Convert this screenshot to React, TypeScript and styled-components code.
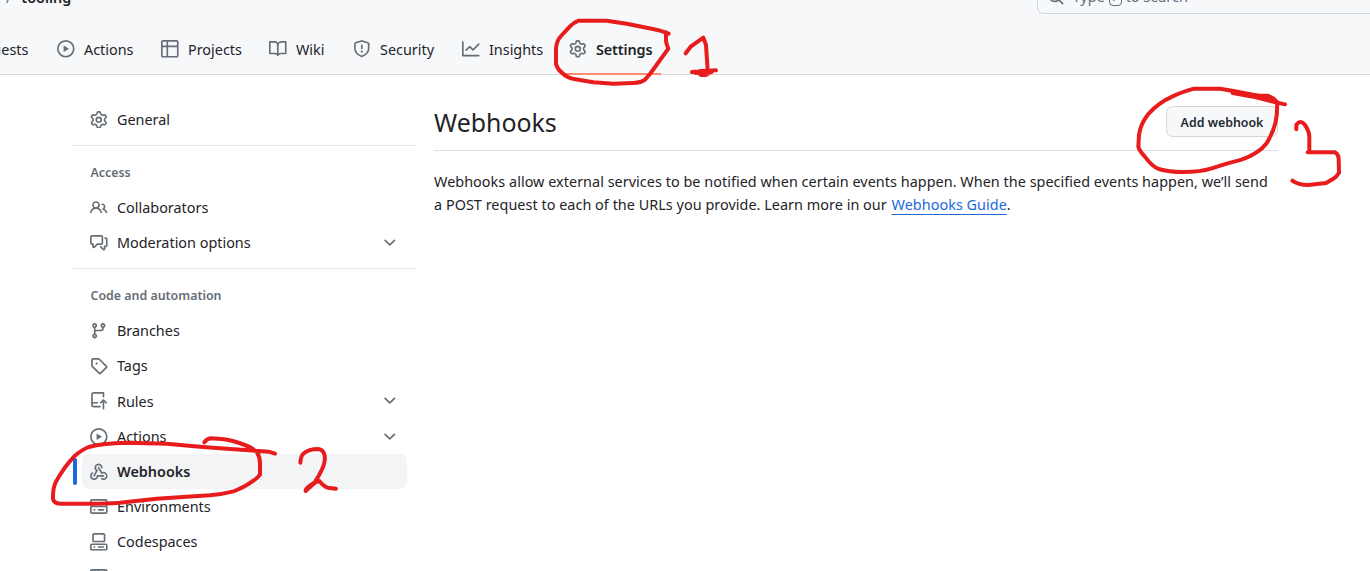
import React from "react";
import styled, { createGlobalStyle } from "styled-components";

const GlobalStyle = createGlobalStyle`
  *, *::before, *::after { box-sizing: border-box; }
  body {
    margin: 0;
    background: #ffffff;
    color: #1f2328;
    font-family: "Noto Sans", "Open Sans", sans-serif;
    font-size: 14.4px;
    overflow: hidden;
  }
`;

const icons = {
  gear: "M8 0a8.2 8.2 0 0 1 .701.031C9.444.095 9.99.645 10.16 1.29l.288 1.107c.018.066.079.158.212.224.231.114.454.243.668.386.123.082.233.09.299.071l1.103-.303c.644-.176 1.392.021 1.82.63.27.385.506.792.704 1.218.315.675.111 1.422-.364 1.891l-.814.806c-.049.048-.098.147-.088.294.016.257.016.515 0 .772-.01.147.038.246.088.294l.814.806c.475.469.679 1.216.364 1.891a7.977 7.977 0 0 1-.704 1.217c-.428.61-1.176.807-1.82.63l-1.102-.302c-.067-.019-.177-.011-.3.071a5.909 5.909 0 0 1-.668.386c-.133.066-.194.158-.211.224l-.29 1.106c-.168.646-.715 1.196-1.458 1.26a8.006 8.006 0 0 1-1.402 0c-.743-.064-1.289-.614-1.458-1.26l-.289-1.106c-.018-.066-.079-.158-.212-.224a5.738 5.738 0 0 1-.668-.386c-.123-.082-.233-.09-.299-.071l-1.103.303c-.644.176-1.392-.021-1.82-.63a8.12 8.12 0 0 1-.704-1.218c-.315-.675-.111-1.422.363-1.891l.815-.806c.05-.048.098-.147.088-.294a6.214 6.214 0 0 1 0-.772c.01-.147-.038-.246-.088-.294l-.815-.806C.635 6.045.431 5.298.746 4.623a7.92 7.92 0 0 1 .704-1.217c.428-.61 1.176-.807 1.82-.63l1.102.302c.067.019.177.011.3-.071.214-.143.437-.272.668-.386.133-.066.194-.158.211-.224l.29-1.106C6.009.645 6.556.095 7.299.03 7.53.01 7.764 0 8 0Zm-.571 1.525c-.036.003-.108.036-.137.146l-.289 1.105c-.147.561-.549.967-.998 1.189-.173.086-.34.183-.5.29-.417.278-.97.423-1.529.27l-1.103-.303c-.109-.03-.175.016-.195.045-.22.312-.412.644-.573.99-.014.031-.021.11.059.19l.815.806c.411.406.562.957.53 1.456a4.709 4.709 0 0 0 0 .582c.032.499-.119 1.05-.53 1.456l-.815.806c-.081.08-.073.159-.059.19.162.346.353.677.573.989.02.03.085.076.195.046l1.102-.303c.56-.153 1.113-.008 1.53.27.161.107.328.204.501.29.447.222.85.629.997 1.189l.289 1.105c.029.109.101.143.137.146a6.6 6.6 0 0 0 1.142 0c.036-.003.108-.036.137-.146l.289-1.105c.147-.561.549-.967.998-1.189.173-.086.34-.183.5-.29.417-.278.97-.423 1.529-.27l1.103.303c.109.029.175-.016.195-.045.22-.313.411-.644.573-.99.014-.031.021-.11-.059-.19l-.815-.806c-.411-.406-.562-.957-.53-1.456a4.709 4.709 0 0 0 0-.582c-.032-.499.119-1.05.53-1.456l.815-.806c.081-.08.073-.159.059-.19a6.464 6.464 0 0 0-.573-.989c-.02-.03-.085-.076-.195-.046l-1.102.303c-.56.153-1.113.008-1.53-.27a4.44 4.44 0 0 0-.501-.29c-.447-.222-.85-.629-.997-1.189l-.289-1.105c-.029-.11-.101-.143-.137-.146a6.6 6.6 0 0 0-1.142 0ZM11 8a3 3 0 1 1-6 0 3 3 0 0 1 6 0ZM9.5 8a1.5 1.5 0 1 0-3.001.001A1.5 1.5 0 0 0 9.5 8Z",
  play: "M8 0a8 8 0 1 1 0 16A8 8 0 0 1 8 0ZM1.5 8a6.5 6.5 0 1 0 13 0 6.5 6.5 0 0 0-13 0Zm4.879-2.773 4.264 2.559a.25.25 0 0 1 0 .428l-4.264 2.559A.25.25 0 0 1 6 10.559V5.442a.25.25 0 0 1 .379-.215Z",
  table: "M0 1.75C0 .784.784 0 1.75 0h12.5C15.216 0 16 .784 16 1.75v12.5A1.75 1.75 0 0 1 14.25 16H1.75A1.75 1.75 0 0 1 0 14.25ZM6.5 6.5v8h7.75a.25.25 0 0 0 .25-.25V6.5Zm8-1.5V1.75a.25.25 0 0 0-.25-.25H6.5V5Zm-13 1.5v7.75c0 .138.112.25.25.25H5v-8ZM5 5V1.5H1.75a.25.25 0 0 0-.25.25V5Z",
  book: "M0 1.75A.75.75 0 0 1 .75 1h4.253c1.227 0 2.317.59 3 1.501A3.743 3.743 0 0 1 11.006 1h4.245a.75.75 0 0 1 .75.75v10.5a.75.75 0 0 1-.75.75h-4.507a2.25 2.25 0 0 0-1.591.659l-.622.621a.75.75 0 0 1-1.06 0l-.622-.621A2.25 2.25 0 0 0 5.258 13H.75a.75.75 0 0 1-.75-.75Zm7.251 10.324.004-5.073-.002-2.253A2.25 2.25 0 0 0 5.003 2.5H1.5v9h3.757a3.75 3.75 0 0 1 1.994.574ZM8.755 4.75l-.004 7.322a3.752 3.752 0 0 1 1.992-.572H14.5v-9h-3.495a2.25 2.25 0 0 0-2.25 2.25Z",
  shield: "M7.467.133a1.748 1.748 0 0 1 1.066 0l5.25 1.68A1.75 1.75 0 0 1 15 3.48V7c0 1.566-.32 3.182-1.303 4.682-.983 1.498-2.585 2.813-5.032 3.855a1.697 1.697 0 0 1-1.33 0c-2.447-1.042-4.049-2.357-5.032-3.855C1.32 10.182 1 8.566 1 7V3.48a1.75 1.75 0 0 1 1.217-1.667Zm.61 1.429a.25.25 0 0 0-.153 0l-5.25 1.68a.25.25 0 0 0-.174.238V7c0 1.358.275 2.666 1.057 3.86.784 1.194 2.121 2.34 4.366 3.297a.196.196 0 0 0 .154 0c2.245-.956 3.582-2.104 4.366-3.298C13.225 9.666 13.5 8.36 13.5 7V3.48a.251.251 0 0 0-.174-.237l-5.25-1.68ZM8.75 4.75v3a.75.75 0 0 1-1.5 0v-3a.75.75 0 0 1 1.5 0ZM9 10.5a1 1 0 1 1-2 0 1 1 0 0 1 2 0Z",
  graph: "M1.5 1.75V13.5h13.75a.75.75 0 0 1 0 1.5H.75a.75.75 0 0 1-.75-.75V1.75a.75.75 0 0 1 1.5 0Zm14.28 2.53-5.25 5.25a.75.75 0 0 1-1.06 0L7 7.06 4.28 9.78a.751.751 0 0 1-1.042-.018.751.751 0 0 1-.018-1.042l3.25-3.25a.75.75 0 0 1 1.06 0L10 7.94l4.72-4.72a.751.751 0 0 1 1.042.018.751.751 0 0 1 .018 1.042Z",
  people: "M2 5.5a3.5 3.5 0 1 1 5.898 2.549 5.508 5.508 0 0 1 3.034 4.084.75.75 0 1 1-1.482.235 4 4 0 0 0-7.9 0 .75.75 0 0 1-1.482-.236A5.507 5.507 0 0 1 3.102 8.05 3.493 3.493 0 0 1 2 5.5ZM11 4a3.001 3.001 0 0 1 2.22 5.018 5.01 5.01 0 0 1 2.56 3.012.749.749 0 0 1-.885.954.752.752 0 0 1-.549-.514 3.507 3.507 0 0 0-2.522-2.372.75.75 0 0 1-.574-.73v-.352a.75.75 0 0 1 .416-.672A1.5 1.5 0 0 0 11 5.5.75.75 0 0 1 11 4Zm-5.5-.5a2 2 0 1 0-.001 3.999A2 2 0 0 0 5.5 3.5Z",
  discussion: "M1.75 1h8.5c.966 0 1.75.784 1.75 1.75v5.5A1.75 1.75 0 0 1 10.25 10H7.061l-2.574 2.573A1.458 1.458 0 0 1 2 11.543V10h-.25A1.75 1.75 0 0 1 0 8.25v-5.5C0 1.784.784 1 1.75 1ZM1.5 2.75v5.5c0 .138.112.25.25.25h1a.75.75 0 0 1 .75.75v2.19l2.72-2.72a.749.749 0 0 1 .53-.22h3.5a.25.25 0 0 0 .25-.25v-5.5a.25.25 0 0 0-.25-.25h-8.5a.25.25 0 0 0-.25.25Zm13 2a.25.25 0 0 0-.25-.25h-.5a.75.75 0 0 1 0-1.5h.5c.966 0 1.75.784 1.75 1.75v5.5A1.75 1.75 0 0 1 14.25 12H14v1.543a1.458 1.458 0 0 1-2.487 1.03L9.22 12.28a.749.749 0 0 1 .326-1.275.749.749 0 0 1 .734.215l2.22 2.22v-2.19a.75.75 0 0 1 .75-.75h1a.25.25 0 0 0 .25-.25Z",
  branch: "M9.5 3.25a2.25 2.25 0 1 1 3 2.122V6A2.5 2.5 0 0 1 10 8.5H6a1 1 0 0 0-1 1v1.128a2.251 2.251 0 1 1-1.5 0V5.372a2.25 2.25 0 1 1 1.5 0v1.836A2.493 2.493 0 0 1 6 7h4a1 1 0 0 0 1-1v-.628A2.25 2.25 0 0 1 9.5 3.25Zm-6 0a.75.75 0 1 0 1.5 0 .75.75 0 0 0-1.5 0Zm8.25-.75a.75.75 0 1 0 0 1.5.75.75 0 0 0 0-1.5ZM4.25 12a.75.75 0 1 0 0 1.5.75.75 0 0 0 0-1.5Z",
  tag: "M1 7.775V2.75C1 1.784 1.784 1 2.75 1h5.025c.464 0 .91.184 1.238.513l6.25 6.25a1.75 1.75 0 0 1 0 2.474l-5.026 5.026a1.75 1.75 0 0 1-2.474 0l-6.25-6.25A1.752 1.752 0 0 1 1 7.775Zm1.5 0c0 .066.026.13.073.177l6.25 6.25a.25.25 0 0 0 .354 0l5.025-5.025a.25.25 0 0 0 0-.354l-6.25-6.25a.25.25 0 0 0-.177-.073H2.75a.25.25 0 0 0-.25.25ZM6 5a1 1 0 1 1 0 2 1 1 0 0 1 0-2Z",
  push: "M1 2.5A2.5 2.5 0 0 1 3.5 0h8.75a.75.75 0 0 1 .75.75v3.5a.75.75 0 0 1-1.5 0V1.5h-8a1 1 0 0 0-1 1v6.708A2.493 2.493 0 0 1 3.5 9h3.25a.75.75 0 0 1 0 1.5H3.5a1 1 0 0 0 0 2h5.75a.75.75 0 0 1 0 1.5H3.5A2.5 2.5 0 0 1 1 11.5Zm13.23 7.79h-.001l-1.224-1.224v6.184a.75.75 0 0 1-1.5 0V9.066L10.28 10.29a.75.75 0 0 1-1.06-1.061l2.505-2.504a.75.75 0 0 1 1.06 0L15.29 9.23a.751.751 0 0 1-.018 1.042.751.751 0 0 1-1.042.018Z",
  webhook: "M5.5 4.25a2.25 2.25 0 0 1 4.5 0 .75.75 0 0 0 1.5 0 3.75 3.75 0 1 0-6.14 2.889l-2.272 4.258a.75.75 0 0 0 1.324.706L7 7.25a.75.75 0 0 0-.309-1.015A2.25 2.25 0 0 1 5.5 4.25ZM7.364 3.607a.75.75 0 0 1 1.03.257l2.608 4.349a3.75 3.75 0 1 1-.628 6.785.75.75 0 0 1 .752-1.299 2.25 2.25 0 1 0-.033-3.88.75.75 0 0 1-1.03-.256L7.107 4.636a.75.75 0 0 1 .257-1.03ZM2.9 8.776A.75.75 0 0 1 2.625 9.8 2.25 2.25 0 1 0 6 11.75a.75.75 0 0 1 .75-.751h5.5a.75.75 0 0 1 0 1.5H7.425a3.751 3.751 0 1 1-5.55-3.998.75.75 0 0 1 1.024.274Z",
  server: "M1.75 1h12.5c.966 0 1.75.784 1.75 1.75v4c0 .372-.116.717-.314 1 .198.283.314.628.314 1v4a1.75 1.75 0 0 1-1.75 1.75H1.75A1.75 1.75 0 0 1 0 12.75v-4c0-.358.109-.707.314-1a1.739 1.739 0 0 1-.314-1v-4C0 1.784.784 1 1.75 1ZM1.5 2.75v4c0 .138.112.25.25.25h12.5a.25.25 0 0 0 .25-.25v-4a.25.25 0 0 0-.25-.25H1.75a.25.25 0 0 0-.25.25Zm.25 5.75a.25.25 0 0 0-.25.25v4c0 .138.112.25.25.25h12.5a.25.25 0 0 0 .25-.25v-4a.25.25 0 0 0-.25-.25ZM7 4.75A.75.75 0 0 1 7.75 4h4.5a.75.75 0 0 1 0 1.5h-4.5A.75.75 0 0 1 7 4.75ZM7.75 10h4.5a.75.75 0 0 1 0 1.5h-4.5a.75.75 0 0 1 0-1.5ZM3 4.75A.75.75 0 0 1 3.75 4h.5a.75.75 0 0 1 0 1.5h-.5A.75.75 0 0 1 3 4.75ZM3.75 10h.5a.75.75 0 0 1 0 1.5h-.5a.75.75 0 0 1 0-1.5Z",
  codespaces: "M0 11.25c0-.966.784-1.75 1.75-1.75h12.5c.966 0 1.75.784 1.75 1.75v3A1.75 1.75 0 0 1 14.25 16H1.75A1.75 1.75 0 0 1 0 14.25Zm2-9.5C2 .784 2.784 0 3.75 0h8.5C13.216 0 14 .784 14 1.75v5a1.75 1.75 0 0 1-1.75 1.75h-8.5A1.75 1.75 0 0 1 2 6.75Zm1.75-.25a.25.25 0 0 0-.25.25v5c0 .138.112.25.25.25h8.5a.25.25 0 0 0 .25-.25v-5a.25.25 0 0 0-.25-.25Zm-2 9.5a.25.25 0 0 0-.25.25v3c0 .138.112.25.25.25h12.5a.25.25 0 0 0 .25-.25v-3a.25.25 0 0 0-.25-.25ZM7 12.75a.75.75 0 0 1 .75-.75h4.5a.75.75 0 0 1 0 1.5h-4.5a.75.75 0 0 1-.75-.75Zm-4 0a.75.75 0 0 1 .75-.75h.5a.75.75 0 0 1 0 1.5h-.5a.75.75 0 0 1-.75-.75Z",
  browser: "M0 2.75C0 1.784.784 1 1.75 1h12.5c.966 0 1.75.784 1.75 1.75v10.5A1.75 1.75 0 0 1 14.25 15H1.75A1.75 1.75 0 0 1 0 13.25ZM14.5 6h-13v7.25c0 .138.112.25.25.25h12.5a.25.25 0 0 0 .25-.25Zm-6-3.5v2h6V2.75a.25.25 0 0 0-.25-.25ZM5 2.5v2h2v-2Zm-3.25 0a.25.25 0 0 0-.25.25V4.5h2v-2Z",
  chevron: "M12.78 5.22a.749.749 0 0 1 0 1.06l-4.25 4.25a.749.749 0 0 1-1.06 0L3.22 6.28a.749.749 0 1 1 1.06-1.06L8 8.939l3.72-3.719a.749.749 0 0 1 1.06 0Z",
  search: "M10.68 11.74a6 6 0 0 1-7.922-8.982 6 6 0 0 1 8.982 7.922l3.04 3.04a.749.749 0 0 1-1.06 1.06ZM11.5 7a4.499 4.499 0 1 0-8.997 0A4.499 4.499 0 0 0 11.5 7Z",
};

type IconName = keyof typeof icons;

const IconSvg = styled.svg`
  width: 17.6px;
  height: 17.6px;
  flex: none;
  fill: #656d76;
`;

const Icon = ({ name }: { name: IconName }) => (
  <IconSvg viewBox="0 0 16 16" aria-hidden="true">
    <path d={icons[name]} />
  </IconSvg>
);

const Page = styled.div`
  position: relative;
  width: 1370px;
  height: 571px;
  overflow: hidden;
`;

const Header = styled.header`
  display: flex;
  flex-direction: column;
  height: 75px;
  background: #f6f8fa;
  border-bottom: 1px solid #d5dae0;
`;

const TopBar = styled.div`
  display: flex;
  flex: none;
  justify-content: space-between;
  height: 35px;
  margin-top: -21px;
`;

const Crumbs = styled.div`
  display: flex;
  gap: 10px;
  padding-left: 6px;
  line-height: 38px;
  color: #656d76;
`;

const RepoName = styled.span`
  font-weight: 600;
  color: #1f2328;
`;

const SearchBox = styled.div`
  display: flex;
  align-items: center;
  width: 350px;
  height: 35px;
  margin-right: -17px;
  padding: 0 10px 0 9px;
  border: 1px solid #d0d7de;
  border-radius: 6.6px;
  color: #656d76;
`;

const SearchHint = styled.span`
  display: flex;
  align-items: center;
  gap: 4px;
  margin-left: 8px;
`;

const Key = styled.kbd`
  display: inline-flex;
  align-items: center;
  justify-content: center;
  width: 13px;
  height: 18px;
  border: 1px solid #656d76;
  border-radius: 4px;
  font: 12px "Noto Sans", sans-serif;
`;

const Tabs = styled.nav`
  display: flex;
  flex: none;
  height: 61px;
  margin-left: -95px;
`;

const Tab = styled.a<{ $width: number; $current?: boolean }>`
  display: flex;
  align-items: center;
  gap: 9.4px;
  flex: none;
  width: ${(p) => p.$width}px;
  padding: 11px 0 0 9px;
  border-bottom: 2px solid ${(p) => (p.$current ? "#fd8c73" : "transparent")};
  font-weight: ${(p) => (p.$current ? 600 : 400)};
  letter-spacing: ${(p) => (p.$current ? "-0.12px" : "0")};
  white-space: nowrap;
`;

const Body = styled.div`
  display: flex;
  gap: 18px;
  padding: 27px 0 0 73px;
`;

const Sidebar = styled.aside`
  width: 343px;
  flex: none;
`;

const Group = styled.section`
  & + & {
    margin-top: 8px;
    border-top: 1px solid #e4e7ea;
  }
`;

const GroupTitle = styled.h3`
  margin: 0;
  height: 43.8px;
  padding: 15.5px 0 0 17.5px;
  font-size: 12.4px;
  line-height: 21px;
  font-weight: 600;
  color: #656d76;
`;

const Row = styled.a<{ $selected?: boolean }>`
  position: relative;
  display: flex;
  align-items: center;
  height: 35.2px;
  margin: 0 9px;
  padding: 0 8px;
  border-radius: 6.6px;
  background: ${(p) => (p.$selected ? "#f3f4f6" : "transparent")};
  font-weight: ${(p) => (p.$selected ? 600 : 400)};

  &::before {
    content: "";
    display: ${(p) => (p.$selected ? "block" : "none")};
    position: absolute;
    left: -9px;
    top: 4.5px;
    width: 4.4px;
    height: 26.4px;
    border-radius: 6px;
    background: #1d69da;
  }
`;

const RowLabel = styled.span`
  flex: 1;
  margin-left: 9.4px;
`;

const Main = styled.main`
  width: 844px;
  padding-top: 4px;
`;

const TitleBar = styled.div`
  display: flex;
  justify-content: space-between;
  height: 45px;
  border-bottom: 1px solid #d8dee4;
`;

const Title = styled.h1`
  margin: 0;
  font-size: 24.9px;
  line-height: 33px;
  font-weight: 400;
`;

const AddButton = styled.button`
  width: 112px;
  height: 31px;
  padding: 1px 0 0;
  border: 1px solid #d3d6da;
  border-radius: 6.6px;
  background: #f6f8fa;
  color: #24292f;
  font: 600 12.4px "Noto Sans", sans-serif;
`;

const Text = styled.p`
  margin: 18.8px 0 0;
  line-height: 23.1px;
  letter-spacing: 0.038px;
  white-space: nowrap;
`;

const GuideLink = styled.a`
  margin-left: 1px;
  color: #1d69da;
  text-decoration: underline;
  text-underline-offset: 4px;
`;

const Ink = styled.svg`
  position: absolute;
  inset: 0;
  pointer-events: none;
  fill: none;
  stroke: #e81c1c;
  stroke-width: 12;
  stroke-linecap: round;
  stroke-linejoin: round;
`;

const tabs: { icon: IconName; label: string; width: number; current?: boolean }[] = [
  { icon: "play", label: "Actions", width: 104 },
  { icon: "table", label: "Projects", width: 108 },
  { icon: "book", label: "Wiki", width: 84 },
  { icon: "shield", label: "Security", width: 109 },
  { icon: "graph", label: "Insights", width: 107 },
  { icon: "gear", label: "Settings", width: 101, current: true },
];

type Item = { icon: IconName; label: string; expandable?: boolean; selected?: boolean };

const groups: { title?: string; items: Item[] }[] = [
  { items: [{ icon: "gear", label: "General" }] },
  {
    title: "Access",
    items: [
      { icon: "people", label: "Collaborators" },
      { icon: "discussion", label: "Moderation options", expandable: true },
    ],
  },
  {
    title: "Code and automation",
    items: [
      { icon: "branch", label: "Branches" },
      { icon: "tag", label: "Tags" },
      { icon: "push", label: "Rules", expandable: true },
      { icon: "play", label: "Actions", expandable: true },
      { icon: "webhook", label: "Webhooks", selected: true },
      { icon: "server", label: "Environments" },
      { icon: "codespaces", label: "Codespaces" },
      { icon: "browser", label: "Pages" },
    ],
  },
];

const Annotations = () => (
  <Ink width="1370" height="571" viewBox="0 0 1370 571">
    <g transform="translate(340 0) scale(.33333)">
      <path d="M986 101Q960 90 935 86L860 71L800 62H716Q700 68 690 79L663 108Q650 122 648 145V192Q654 210 666 218Q680 234 706 238L760 247L820 251L880 249Q904 248 915 239L930 222L985 146Q979 134 978 122V97" />
      <path d="M1037 160L1053 139L1090 113L1098 135L1103 210M1056 216L1128 211M1066 218L1114 217M1083 225L1098 225M1078 221H1105M1080 213H1115" />
    </g>
    <g transform="translate(1020 0) scale(.33333)">
      <path d="M795 313L755 304L700 290L638 279M768 303Q760 292 742 287H715L640 273L600 266H522Q485 276 458 289Q415 308 385 342Q361 372 357 405L355 440Q358 452 374 469Q397 500 416 507Q445 516 490 516Q540 516 575 505L620 491L665 479Q716 461 740 430Q759 398 766 370Q773 340 771 306L745 290L670 281" />
      <path d="M829 388V374Q842 358 855 375Q868 394 868 412V455L863 457H945Q955 463 956 475L957 518Q950 530 940 536L918 549L865 555Q834 555 817 542" />
    </g>
    <g transform="translate(40 410) scale(.33333)">
      <path d="M493 97Q501 86 512 85Q560 86 598 99Q635 111 651 127Q661 142 660 165V194Q652 205 640 212Q610 234 580 244Q545 253 510 256L440 260L350 266L240 278Q200 281 150 281H60Q42 280 39 267Q38 234 48 215Q72 171 103 139Q125 119 146 111Q190 99 260 98L380 101L480 110L560 116L655 123L686 125L705 131" />
      <path d="M781 158Q782 139 790 131Q806 117 835 117Q850 118 854 137Q857 155 846 178Q837 199 825 215Q812 231 797 243L798 238Q816 218 838 213Q852 230 863 233L888 236M797 241L828 216" />
    </g>
  </Ink>
);

export default function App() {
  return (
    <Page>
      <GlobalStyle />
      <Header>
        <TopBar>
          <Crumbs>
            <span>/</span>
            <RepoName>tooling</RepoName>
          </Crumbs>
          <SearchBox>
            <Icon name="search" />
            <SearchHint>
              Type <Key>/</Key> to search
            </SearchHint>
          </SearchBox>
        </TopBar>
        <Tabs>
          <Tab $width={143}>
            <IconSvg />
            Pull requests
          </Tab>
          {tabs.map((t) => (
            <Tab key={t.label} $width={t.width} $current={t.current}>
              <Icon name={t.icon} />
              {t.label}
            </Tab>
          ))}
        </Tabs>
      </Header>
      <Body>
        <Sidebar>
          {groups.map((g, i) => (
            <Group key={i}>
              {g.title && <GroupTitle>{g.title}</GroupTitle>}
              {g.items.map((item) => (
                <Row key={item.label} $selected={item.selected}>
                  <Icon name={item.icon} />
                  <RowLabel>{item.label}</RowLabel>
                  {item.expandable && <Icon name="chevron" />}
                </Row>
              ))}
            </Group>
          ))}
        </Sidebar>
        <Main>
          <TitleBar>
            <Title>Webhooks</Title>
            <AddButton>Add webhook</AddButton>
          </TitleBar>
          <Text>
            Webhooks allow external services to be notified when certain events happen. When the
            specified events happen, we’ll send
            <br />a POST request to each of the URLs you provide. Learn more in our{" "}
            <GuideLink>Webhooks Guide</GuideLink>.
          </Text>
        </Main>
      </Body>
      <Annotations />
    </Page>
  );
}
